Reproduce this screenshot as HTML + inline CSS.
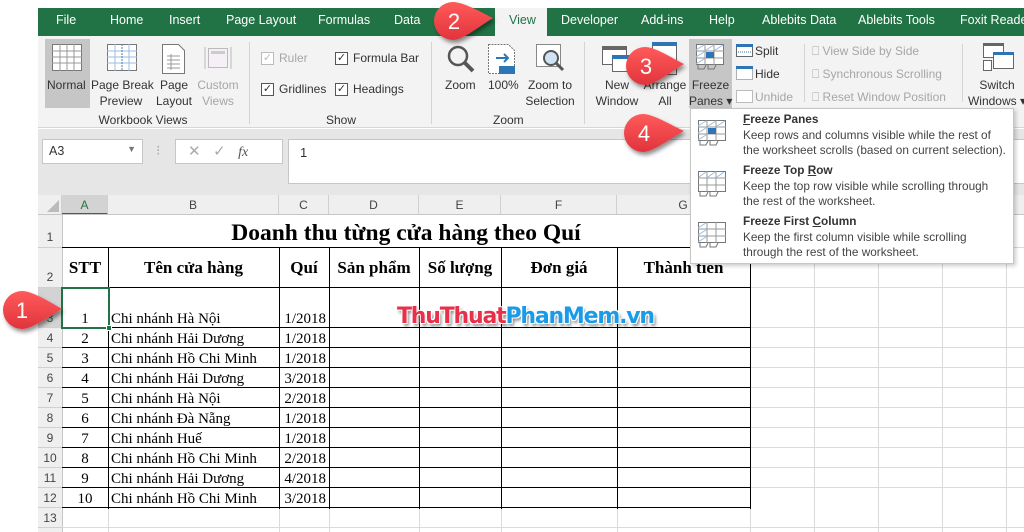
<!DOCTYPE html>
<html><head><meta charset="utf-8"><style>
*{margin:0;padding:0;box-sizing:border-box}
html,body{width:1024px;height:532px;overflow:hidden}
body{background:#fff;font-family:"Liberation Sans",sans-serif;position:relative}
.a{position:absolute;white-space:nowrap}
.t{font-size:12.5px;color:#fff;top:13px}
.r{font-size:12px;color:#333;text-align:center;line-height:16px}
.g{color:#a6a6a6}
.cb{position:absolute;width:13px;height:13px;border:1px solid #555;background:#fff;font-size:11px;line-height:11px;text-align:center;color:#333}
.sep{position:absolute;top:42px;width:1px;height:82px;background:#d4d4d4}
.ch{position:absolute;top:195px;height:20px;font-size:12px;color:#444;text-align:center;line-height:20px;border-right:1px solid #d0d0d0;background:#efefef}
.rh{position:absolute;left:38px;width:24px;font-size:12px;color:#444;text-align:center;border-bottom:1px solid #d0d0d0;background:#efefef}
.vl{position:absolute;width:1px;background:#dadada}
.hl{position:absolute;height:1px;background:#dadada}
.bv{position:absolute;width:1px;background:#000;top:248px;height:261px}
.bh{position:absolute;height:1px;background:#000;left:62px;width:689px}
.c{position:absolute;font-family:"Liberation Serif",serif;font-size:15px;color:#000;white-space:nowrap}
.hd{font-weight:bold;font-size:17px}
.mi{position:absolute;left:743px;font-size:11.8px;color:#444;line-height:15.5px}
.mi b{color:#333}
</style></head><body>
<div class="a" style="left:38px;top:8px;width:986px;height:28px;background:#217346"></div>
<div class="a" style="left:495px;top:8px;width:52px;height:28px;background:#f3f3f3"></div>
<div class="a t" style="left:56px">File</div>
<div class="a t" style="left:110px">Home</div>
<div class="a t" style="left:169px">Insert</div>
<div class="a t" style="left:226px">Page Layout</div>
<div class="a t" style="left:318px">Formulas</div>
<div class="a t" style="left:394px">Data</div>
<div class="a t" style="left:509px;color:#217346">View</div>
<div class="a t" style="left:561px">Developer</div>
<div class="a t" style="left:641px">Add-ins</div>
<div class="a t" style="left:709px">Help</div>
<div class="a t" style="left:762px">Ablebits Data</div>
<div class="a t" style="left:858px">Ablebits Tools</div>
<div class="a t" style="left:960px">Foxit Reader</div>
<div class="a" style="left:38px;top:36px;width:986px;height:92px;background:#f3f3f3;border-bottom:1px solid #d6d6d6"></div>
<div class="a" style="left:45px;top:39px;width:45px;height:69px;background:#c6c6c6"></div>
<svg class="a" style="left:52px;top:44px" width="30" height="28"><rect x=".5" y=".5" width="29" height="26" fill="#fff" stroke="#777"/><path d="M0 7h30M0 13h30M0 19h30M8 0v27M15 0v27M22 0v27" stroke="#999"/></svg>
<svg class="a" style="left:107px;top:44px" width="30" height="28"><rect x=".5" y=".5" width="29" height="26" fill="#fff" stroke="#777"/><path d="M0 7h30M0 13h30M0 19h30M8 0v27M22 0v27" stroke="#9bbde0"/><path d="M15 0v27" stroke="#4a7ebb" stroke-dasharray="2 1"/></svg>
<svg class="a" style="left:162px;top:44px" width="24" height="30"><path d="M.5 .5h16l6 6v23H.5z" fill="#fff" stroke="#777"/><path d="M5 12h13M5 16h13M5 20h13M5 24h13M9 10v16" stroke="#999"/></svg>
<svg class="a" style="left:204px;top:44px" width="28" height="28"><rect x="4.5" y="4.5" width="19" height="19" fill="#f5f0f5" stroke="#bbb"/><rect x="7" y="7" width="14" height="3" fill="#ccc"/><path d="M1 3v22M27 3v22" stroke="#bbb"/></svg>
<div class="a r" style="left:47px;top:77px">Normal</div>
<div class="a r" style="left:91px;top:77px;width:60px">Page Break<br>Preview</div>
<div class="a r" style="left:154px;top:77px;width:40px">Page<br>Layout</div>
<div class="a r g" style="left:196px;top:77px;width:44px">Custom<br>Views</div>
<div class="a r" style="left:90px;top:112px;width:106px">Workbook Views</div>
<div class="sep" style="left:249px"></div>
<div class="cb" style="left:261px;top:52px;border-color:#bbb;color:#bbb">✓</div><div class="a r g" style="left:279px;top:50px">Ruler</div>
<div class="cb" style="left:335px;top:52px">✓</div><div class="a r" style="left:353px;top:50px">Formula Bar</div>
<div class="cb" style="left:261px;top:83px">✓</div><div class="a r" style="left:279px;top:81px">Gridlines</div>
<div class="cb" style="left:335px;top:83px">✓</div><div class="a r" style="left:353px;top:81px">Headings</div>
<div class="a r" style="left:326px;top:112px">Show</div>
<div class="sep" style="left:431px"></div>
<svg class="a" style="left:446px;top:44px" width="30" height="30"><circle cx="12" cy="12" r="9" fill="none" stroke="#555" stroke-width="2.5"/><path d="M18 18l9 9" stroke="#555" stroke-width="4"/></svg>
<svg class="a" style="left:488px;top:44px" width="30" height="30"><path d="M.5 .5h20l6 6v23H.5z" fill="#fff" stroke="#777" stroke-dasharray="2 1"/><path d="M8 14h12M16 10l4 4-4 4" stroke="#2e75b6" stroke-width="2" fill="none"/><rect x="11" y="22" width="16" height="8" fill="#2e75b6"/></svg>
<svg class="a" style="left:536px;top:44px" width="30" height="30"><rect x=".5" y=".5" width="24" height="22" fill="#fff" stroke="#888"/><circle cx="15" cy="14" r="7" fill="#cfe3f5" stroke="#555" stroke-width="2"/><path d="M20 19l7 7" stroke="#555" stroke-width="3"/></svg>
<div class="a r" style="left:445px;top:77px">Zoom</div>
<div class="a r" style="left:488px;top:77px">100%</div>
<div class="a r" style="left:522px;top:77px;width:56px">Zoom to<br>Selection</div>
<div class="a r" style="left:493px;top:112px">Zoom</div>
<div class="sep" style="left:584px"></div>
<svg class="a" style="left:602px;top:43px" width="32" height="32"><rect x=".5" y="3.5" width="24" height="18" fill="#fff" stroke="#666"/><rect x="0" y="3" width="25" height="4" fill="#666"/><rect x="10.5" y="12.5" width="18" height="16" fill="#fff" stroke="#666"/><rect x="10" y="12" width="19" height="4" fill="#2e75b6"/></svg>
<svg class="a" style="left:652px;top:42px" width="26" height="34"><rect x=".5" y=".5" width="24" height="32" fill="#fff" stroke="#666"/><rect x="0" y="0" width="25" height="4" fill="#2e75b6"/></svg>
<div class="a r" style="left:592px;top:77px;width:50px">New<br>Window</div>
<div class="a r" style="left:642px;top:77px;width:46px">Arrange<br>All</div>
<div class="a" style="left:689px;top:39px;width:43px;height:69px;background:#c6c6c6"></div>
<svg class="a" style="left:696px;top:44px" width="30" height="30"><rect x=".5" y=".5" width="27" height="20" fill="#fff" stroke="#777"/><path d="M0 7h28M0 14h28M9 0v21M18 0v21" stroke="#999"/><path d="M0 6L8 1M0 13L8 8M0 20L8 15M10 6L18 1M19 6L27 1" stroke="#9bbde0"/><rect x="10" y="8" width="8" height="6" fill="#2e75b6"/><path d="M2 21v4h6l2-4M12 21v4h6l2-4" stroke="#777" fill="none"/></svg>
<div class="a r" style="left:689px;top:77px;width:43px">Freeze<br>Panes ▾</div>
<svg class="a" style="left:736px;top:44px" width="18" height="60"><rect x=".5" y=".5" width="16" height="12" fill="#fff" stroke="#666"/><rect x="0" y="0" width="17" height="3" fill="#2e75b6"/><path d="M2 8h13" stroke="#2e75b6" stroke-dasharray="1 1"/><rect x=".5" y="22.5" width="16" height="13" fill="#fff" stroke="#666" stroke-dasharray="1 1"/><rect x="0" y="22" width="17" height="3" fill="#2e75b6"/><rect x=".5" y="46.5" width="16" height="12" fill="#fff" stroke="#bbb"/></svg>
<div class="a r" style="left:755px;top:43px">Split</div>
<div class="a r" style="left:755px;top:66px">Hide</div>
<div class="a r g" style="left:755px;top:89px">Unhide</div>
<div class="sep" style="left:804px;top:44px;height:58px"></div>
<div class="a r g" style="left:812px;top:43px">⎕ View Side by Side</div>
<div class="a r g" style="left:812px;top:66px">⎕ Synchronous Scrolling</div>
<div class="a r g" style="left:812px;top:89px">⎕ Reset Window Position</div>
<div class="sep" style="left:962px;top:44px;height:58px"></div>
<svg class="a" style="left:983px;top:43px" width="32" height="30"><rect x=".5" y=".5" width="20" height="14" fill="#fff" stroke="#666"/><rect x="0" y="0" width="21" height="3" fill="#666"/><rect x="10.5" y="9.5" width="20" height="16" fill="#fff" stroke="#666"/><rect x="10" y="9" width="21" height="3" fill="#2e75b6"/><rect x=".5" y="17.5" width="8" height="10" fill="#fff" stroke="#666"/></svg>
<div class="a r" style="left:966px;top:77px;width:62px">Switch<br>Windows ▾</div>
<div class="a" style="left:38px;top:129px;width:986px;height:66px;background:#e6e6e6"></div>
<div class="a" style="left:42px;top:139px;width:101px;height:25px;background:#fff;border:1px solid #c6c6c6;font-size:12.5px;color:#333;padding:4px 6px">A3<span style="position:absolute;right:6px;top:4px;font-size:9px;color:#777">▼</span></div>
<div class="a" style="left:156px;top:142px;color:#aaa;font-size:14px">⁝</div>
<div class="a" style="left:175px;top:139px;width:108px;height:25px;background:#fff;border:1px solid #c6c6c6;font-size:15px;color:#aaa;padding:2px 0 0 12px">✕ &nbsp; ✓ &nbsp; <i style="font-family:'Liberation Serif';color:#555;font-size:14px">fx</i></div>
<div class="a" style="left:288px;top:139px;width:736px;height:45px;background:#fff;border:1px solid #c6c6c6;border-right:none;font-size:13px;color:#333;padding:5px 11px">1</div>
<div class="a" style="left:38px;top:195px;width:24px;height:20px;background:#efefef;border-right:1px solid #d0d0d0"></div>
<svg class="a" style="left:46px;top:200px" width="14" height="13"><path d="M13 0v12H1z" fill="#bbb"/></svg>
<div class="ch" style="left:62px;width:46px;background:#d3d3d3;border-bottom:2px solid #217346;color:#217346">A</div>
<div class="ch" style="left:108px;width:171px">B</div>
<div class="ch" style="left:279px;width:50px">C</div>
<div class="ch" style="left:329px;width:90px">D</div>
<div class="ch" style="left:419px;width:82px">E</div>
<div class="ch" style="left:501px;width:116px">F</div>
<div class="ch" style="left:617px;width:133px">G</div>
<div class="ch" style="left:750px;width:64px"></div>
<div class="ch" style="left:814px;width:64px"></div>
<div class="ch" style="left:878px;width:64px"></div>
<div class="ch" style="left:942px;width:64px"></div>
<div class="ch" style="left:1006px;width:64px"></div>
<div class="a" style="left:38px;top:214px;width:986px;height:1px;background:#c6c6c6"></div>
<div class="rh" style="top:215px;height:33px;padding-top:15px">1</div>
<div class="rh" style="top:248px;height:40px;padding-top:22px">2</div>
<div class="rh" style="top:288px;height:40px;padding-top:23px;background:#d3d3d3;color:#217346">3</div>
<div class="rh" style="top:328px;height:20px;padding-top:3px">4</div>
<div class="rh" style="top:348px;height:20px;padding-top:3px">5</div>
<div class="rh" style="top:368px;height:20px;padding-top:3px">6</div>
<div class="rh" style="top:388px;height:20px;padding-top:3px">7</div>
<div class="rh" style="top:408px;height:20px;padding-top:3px">8</div>
<div class="rh" style="top:428px;height:20px;padding-top:3px">9</div>
<div class="rh" style="top:448px;height:20px;padding-top:3px">10</div>
<div class="rh" style="top:468px;height:20px;padding-top:3px">11</div>
<div class="rh" style="top:488px;height:20px;padding-top:3px">12</div>
<div class="rh" style="top:508px;height:20px;padding-top:3px">13</div>
<div class="rh" style="top:528px;height:20px"></div>
<div class="a" style="left:62px;top:215px;width:1px;height:317px;background:#c6c6c6"></div>
<div class="vl" style="left:814px;top:215px;height:317px"></div>
<div class="vl" style="left:878px;top:215px;height:317px"></div>
<div class="vl" style="left:942px;top:215px;height:317px"></div>
<div class="vl" style="left:1006px;top:215px;height:317px"></div>
<div class="vl" style="left:108px;top:508px;height:24px"></div>
<div class="vl" style="left:279px;top:508px;height:24px"></div>
<div class="vl" style="left:329px;top:508px;height:24px"></div>
<div class="vl" style="left:419px;top:508px;height:24px"></div>
<div class="vl" style="left:501px;top:508px;height:24px"></div>
<div class="vl" style="left:617px;top:508px;height:24px"></div>
<div class="vl" style="left:750px;top:508px;height:24px"></div>
<div class="hl" style="left:750px;top:247px;width:274px"></div>
<div class="hl" style="left:750px;top:287px;width:274px"></div>
<div class="hl" style="left:750px;top:327px;width:274px"></div>
<div class="hl" style="left:750px;top:347px;width:274px"></div>
<div class="hl" style="left:750px;top:367px;width:274px"></div>
<div class="hl" style="left:750px;top:387px;width:274px"></div>
<div class="hl" style="left:750px;top:407px;width:274px"></div>
<div class="hl" style="left:750px;top:427px;width:274px"></div>
<div class="hl" style="left:750px;top:447px;width:274px"></div>
<div class="hl" style="left:750px;top:467px;width:274px"></div>
<div class="hl" style="left:750px;top:487px;width:274px"></div>
<div class="hl" style="left:62px;top:527px;width:962px"></div>
<div class="bh" style="top:247px"></div><div class="bh" style="top:287px"></div><div class="bh" style="top:327px"></div>
<div class="bh" style="top:347px"></div><div class="bh" style="top:367px"></div><div class="bh" style="top:387px"></div>
<div class="bh" style="top:407px"></div><div class="bh" style="top:427px"></div><div class="bh" style="top:447px"></div>
<div class="bh" style="top:467px"></div><div class="bh" style="top:487px"></div><div class="bh" style="top:507px"></div>
<div class="bv" style="left:108px"></div><div class="bv" style="left:279px"></div><div class="bv" style="left:329px"></div>
<div class="bv" style="left:419px"></div><div class="bv" style="left:501px"></div><div class="bv" style="left:617px"></div><div class="bv" style="left:750px"></div>
<div class="c" style="left:62px;width:688px;top:220px;text-align:center;font-weight:bold;font-size:23.5px">Doanh thu từng cửa hàng theo Quí</div>
<div class="c hd" style="left:62px;width:46px;text-align:center;top:258px">STT</div>
<div class="c hd" style="left:108px;width:171px;text-align:center;top:258px">Tên cửa hàng</div>
<div class="c hd" style="left:279px;width:50px;text-align:center;top:258px">Quí</div>
<div class="c hd" style="left:329px;width:90px;text-align:center;top:258px">Sản phẩm</div>
<div class="c hd" style="left:419px;width:82px;text-align:center;top:258px">Số lượng</div>
<div class="c hd" style="left:501px;width:116px;text-align:center;top:258px">Đơn giá</div>
<div class="c hd" style="left:617px;width:133px;text-align:center;top:258px">Thành tiền</div>
<div class="a" style="left:61px;top:287px;width:49px;height:42px;border:2px solid #217346"></div>
<div class="a" style="left:106px;top:325px;width:6px;height:6px;background:#217346;border:1px solid #fff"></div>
<div class="c" style="left:62px;width:46px;text-align:center;top:309px;line-height:20px">1<br>2<br>3<br>4<br>5<br>6<br>7<br>8<br>9<br>10</div>
<div class="c" style="left:111px;top:309px;line-height:20px">Chi nhánh Hà Nội<br>Chi nhánh Hải Dương<br>Chi nhánh Hồ Chi Minh<br>Chi nhánh Hải Dương<br>Chi nhánh Hà Nội<br>Chi nhánh Đà Nẵng<br>Chi nhánh Huế<br>Chi nhánh Hồ Chi Minh<br>Chi nhánh Hải Dương<br>Chi nhánh Hồ Chi Minh</div>
<div class="c" style="left:279px;width:47px;text-align:right;top:309px;line-height:20px">1/2018<br>1/2018<br>1/2018<br>3/2018<br>2/2018<br>1/2018<br>1/2018<br>2/2018<br>4/2018<br>3/2018</div>
<div class="a" style="left:397px;top:304px;font-family:'DejaVu Sans',sans-serif;font-weight:bold;font-size:22px;letter-spacing:-1.2px;text-shadow:-1px -1px 0 #fff,1px -1px 0 #fff,-1px 1px 0 #fff,1px 1px 0 #fff,2px 3px 3px rgba(0,0,0,.5)"><span style="color:#e8304a">ThuThuat</span><span style="color:#1a9be8">PhanMem.vn</span></div>
<div class="a" style="left:690px;top:108px;width:324px;height:156px;background:#fff;border:1px solid #c6c6c6;box-shadow:2px 2px 4px rgba(0,0,0,.2)"></div>
<svg class="a" style="left:698px;top:120px" width="30" height="140"><rect x=".5" y=".5" width="27" height="20" fill="#fff" stroke="#777"/><path d="M0 7h28M0 14h28M9 0v21M18 0v21" stroke="#999"/><path d="M0 6L8 1M0 13L8 8M0 20L8 15M10 6L18 1M19 6L27 1" stroke="#9bbde0"/><path d="M2 21v4h6l2-4M12 21v4h6l2-4" stroke="#777" fill="none"/><rect x="10" y="8" width="8" height="6" fill="#2e75b6"/><g transform="translate(0,51)"><rect x=".5" y=".5" width="27" height="20" fill="#fff" stroke="#777"/><path d="M0 7h28M0 14h28M9 0v21M18 0v21" stroke="#999"/><path d="M1 6L8 1M10 6L17 1M19 6L26 1" stroke="#9bbde0"/><path d="M2 21v4h6l2-4M12 21v4h6l2-4" stroke="#777" fill="none"/></g><g transform="translate(0,102)"><rect x=".5" y=".5" width="27" height="20" fill="#fff" stroke="#777"/><path d="M0 7h28M0 14h28M9 0v21M18 0v21" stroke="#999"/><path d="M0 6L8 1M0 13L8 8M0 20L8 15" stroke="#9bbde0"/><path d="M2 21v4h6l2-4M12 21v4h6l2-4" stroke="#777" fill="none"/></g></svg>
<div class="mi" style="top:112px"><b><u>F</u>reeze Panes</b><br>Keep rows and columns visible while the rest of<br>the worksheet scrolls (based on current selection).</div>
<div class="mi" style="top:163px"><b>Freeze Top <u>R</u>ow</b><br>Keep the top row visible while scrolling through<br>the rest of the worksheet.</div>
<div class="mi" style="top:214px"><b>Freeze First <u>C</u>olumn</b><br>Keep the first column visible while scrolling<br>through the rest of the worksheet.</div>
<svg class="a" style="left:0;top:0" width="1024" height="532" overflow="visible">
<defs><filter id="s" x="-50%" y="-50%" width="200%" height="200%"><feDropShadow dx="2" dy="3" stdDeviation="2" flood-opacity=".45"/></filter>
<linearGradient id="gr" x1="0" y1="0" x2="0" y2="1"><stop offset="0" stop-color="#ff5a5a"/><stop offset="1" stop-color="#e0343c"/></linearGradient></defs>
<g filter="url(#s)" fill="url(#gr)">
<path d="M22 291 C32 291 50 302 62 309 C50 316 32 329 22 329 A19 19 0 0 1 22 291Z"/>
<path d="M453 2 C463 2 481 12 493 18 C481 25 463 40 453 40 A19 19 0 0 1 453 2Z"/>
<path d="M645 47 C655 47 672 58 684 64 C672 71 655 85 645 85 A19 19 0 0 1 645 47Z"/>
<path d="M643 114 C653 114 671 125 684 131 C671 138 653 152 643 152 A19 19 0 0 1 643 114Z"/>
</g>
<g fill="#fff" font-family="Liberation Sans,sans-serif" font-size="22" text-anchor="middle">
<text x="22" y="318">1</text><text x="454" y="29">2</text><text x="646" y="74">3</text><text x="644" y="141">4</text></g>
</svg>
</body></html>
